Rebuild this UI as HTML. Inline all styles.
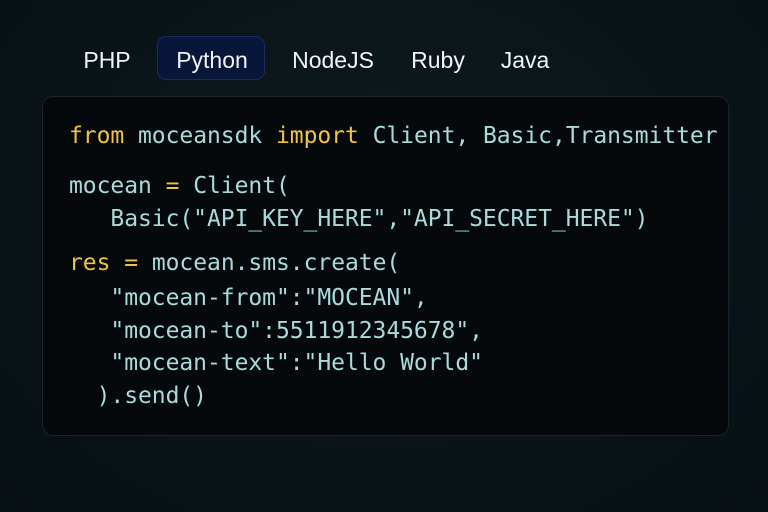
<!DOCTYPE html>
<html><head><style>
html,body{margin:0;padding:0}
body{width:768px;height:512px;overflow:hidden;background:radial-gradient(ellipse at 50% 40%,#0e1a20 0%,#0a1418 60%,#071013 100%);position:relative;font-family:"Liberation Sans",sans-serif}
.tab{position:absolute;top:46px;color:#f2f4f5;font-size:23px;line-height:28px;transform:translateX(-50%)}
.pill{position:absolute;left:157px;top:36px;width:108px;height:44px;border-radius:9px;background:#08163a;border:1px solid #1c2b5c;box-sizing:border-box}
.card{position:absolute;left:42px;top:96px;width:687px;height:340px;border-radius:11px;background:#05090b;border:1px solid #1a252b;box-sizing:border-box}
.l{position:absolute;left:69px;font-family:"DejaVu Sans Mono","Liberation Mono",monospace;font-size:23px;line-height:30px;color:#a9dbdc;white-space:pre;letter-spacing:-0.05px}
.y{color:#efc24a}
</style></head><body>
<div class="pill"></div>
<div class="tab" style="left:107px">PHP</div>
<div class="tab" style="left:212px">Python</div>
<div class="tab" style="left:333px">NodeJS</div>
<div class="tab" style="left:438px">Ruby</div>
<div class="tab" style="left:525px">Java</div>
<div class="card"></div>
<div class="l" style="top:121px"><span class="y">from</span> moceansdk <span class="y">import</span> Client, Basic,Transmitter</div>
<div class="l" style="top:171px">mocean <span class="y">=</span> Client(</div>
<div class="l" style="top:204px">   Basic("API_KEY_HERE","API_SECRET_HERE")</div>
<div class="l" style="top:248px"><span class="y">res</span> <span class="y">=</span> mocean.sms.create(</div>
<div class="l" style="top:283px">   "mocean-from":"MOCEAN",</div>
<div class="l" style="top:316px">   "mocean-to":5511912345678",</div>
<div class="l" style="top:348px">   "mocean-text":"Hello World"</div>
<div class="l" style="top:381px">  ).send()</div>
</body></html>
